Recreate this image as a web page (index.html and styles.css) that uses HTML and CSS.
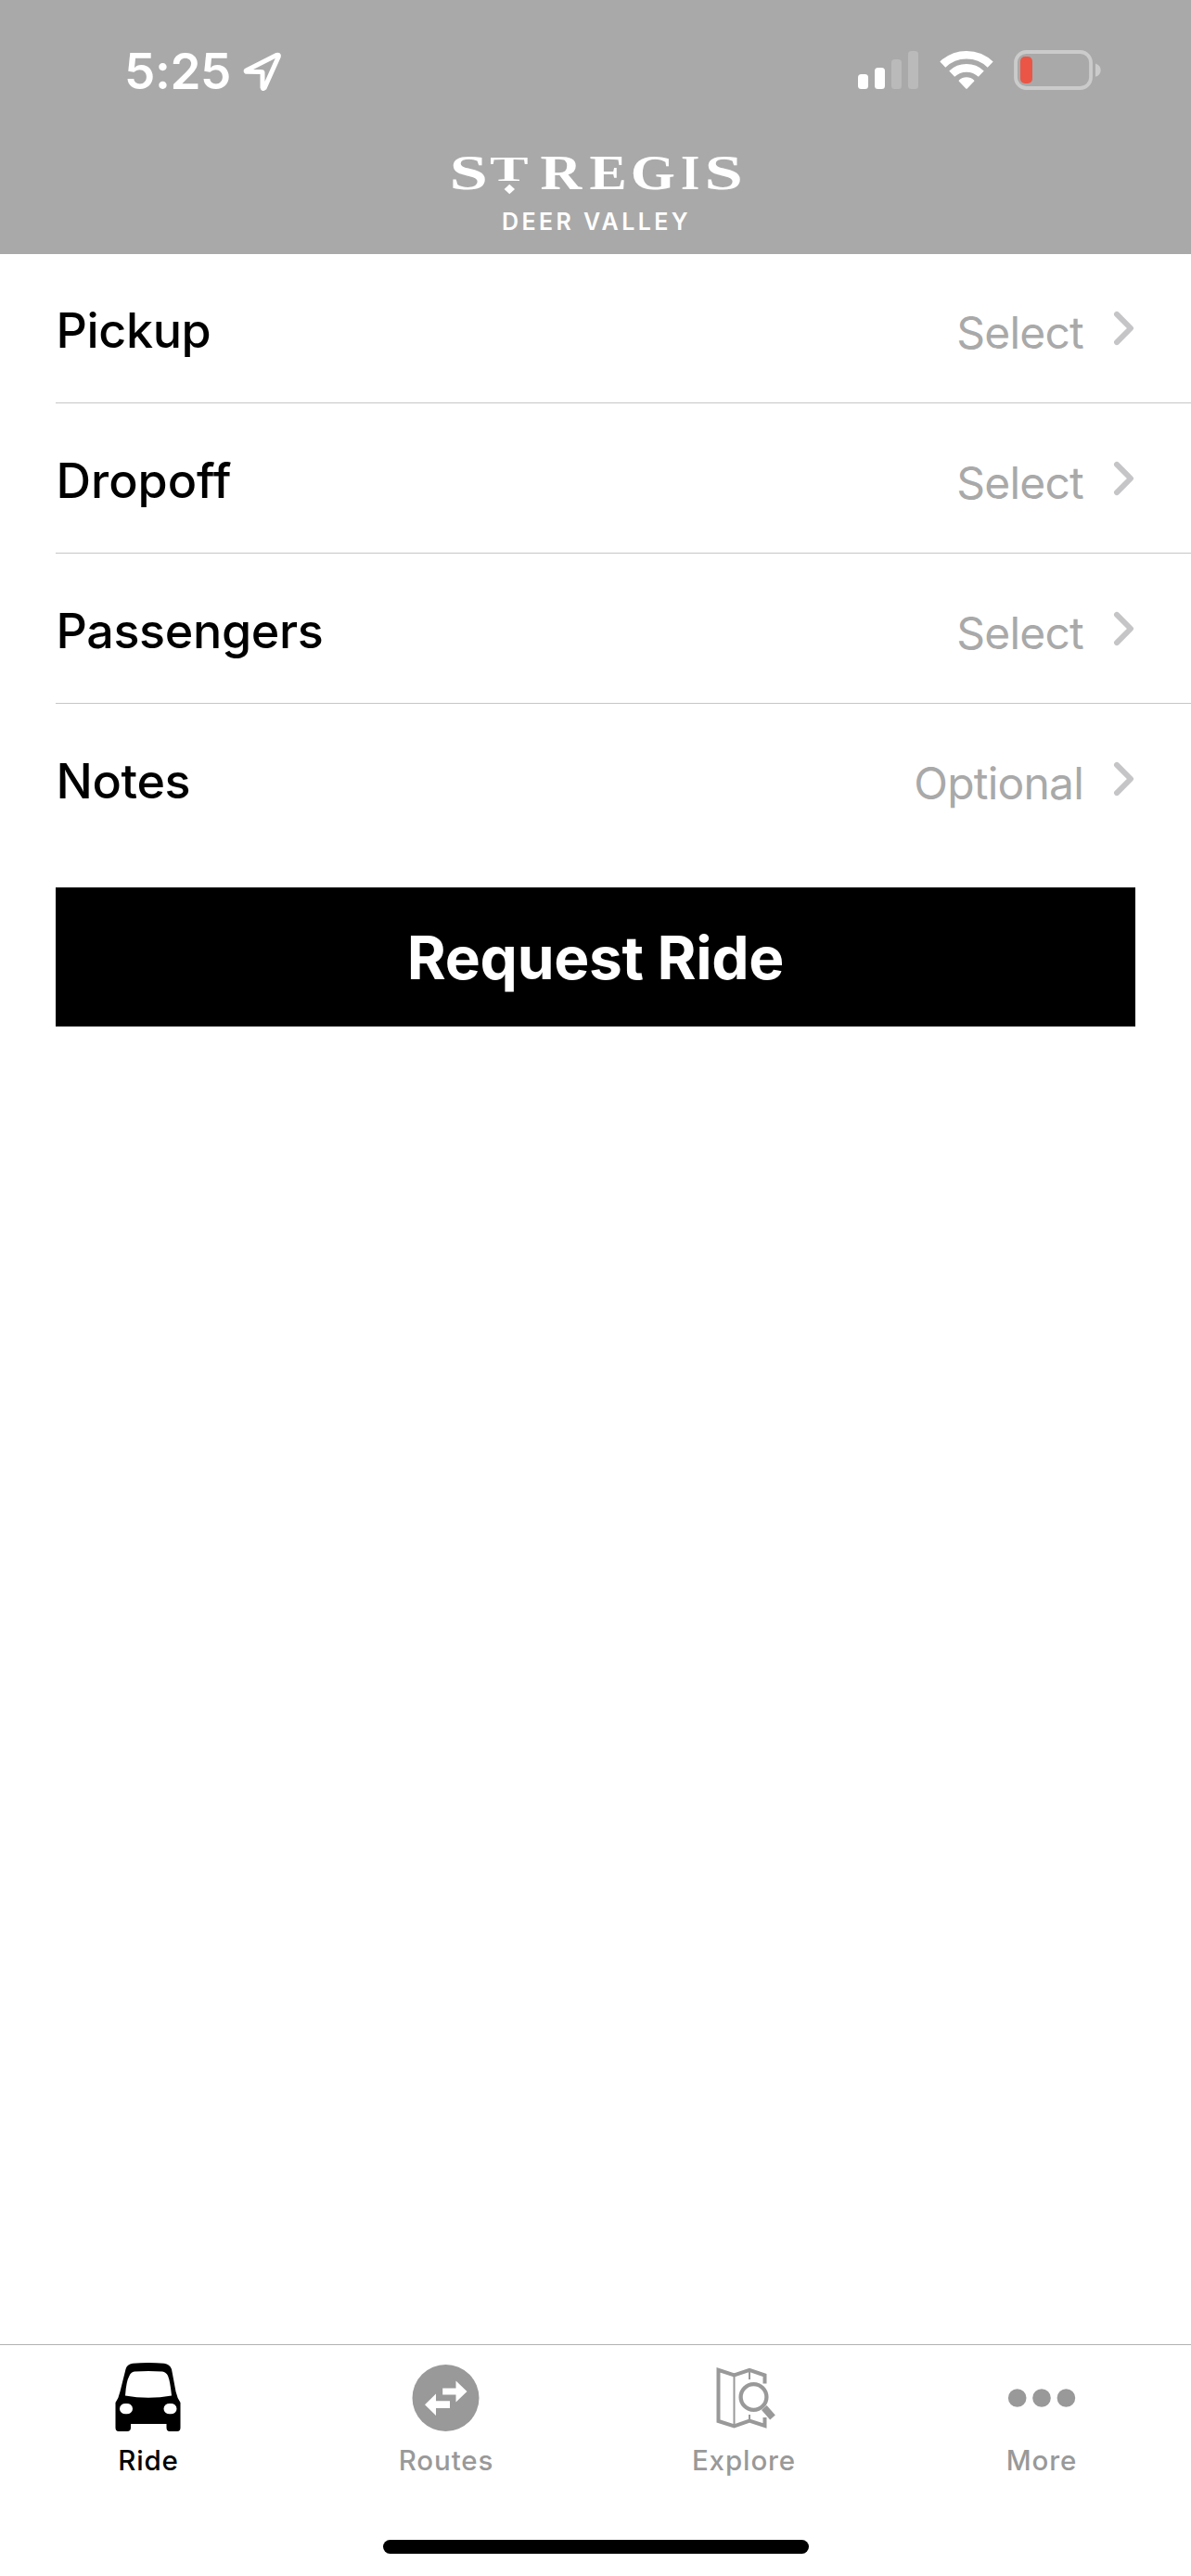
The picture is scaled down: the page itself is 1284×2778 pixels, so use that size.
FILE: index.html
```html
<!DOCTYPE html>
<html lang="en">
<head>
<meta charset="utf-8">
<title>St. Regis Deer Valley</title>
<link rel="stylesheet" href="styles.css">
</head>
<body>
<div class="app">
  <header class="header">
    <div class="status-bar">
      <div class="status-left">
        <span class="time">5:25</span>
        <svg class="icon-location" width="43" height="44" viewBox="0 0 43 44"><path d="M4.300 22.200Q3.600 21.400 5 20.700L37.500 4.300Q39.900 3.600 39.300 6L24.200 39.800Q22.400 41.500 22 39.200V23.600Q22 22.600 21 22.600Z" fill="none" stroke="#fff" stroke-width="5" stroke-linejoin="round"/></svg>
      </div>
      <div class="status-right">
        <svg class="icon-signal" width="65" height="41" viewBox="0 0 65 41"><g fill="#fff"><rect y="25" width="11" height="16" rx="3.5"/><rect x="18" y="18" width="11" height="23" rx="3.5"/></g><g fill="#bababa"><rect x="36" y="9" width="11" height="32" rx="3.5"/><rect x="54" width="11" height="41" rx="3.5"/></g></svg>
        <svg class="icon-wifi" width="58" height="43" viewBox="0 0 58 43"><g fill="none" stroke="#fff" stroke-width="8.6"><path d="M3.300 15.600A37 37 0 0 1 54.700 15.600"/><path d="M13.200 25.700A23 23 0 0 1 44.800 25.700"/></g><path d="M20.900 33.800a1 1 0 0 1 0-1.400A12 12 0 0 1 37.100 32.400a1 1 0 0 1 0 1.400L29.700 41.600a1 1 0 0 1-1.400 0Z" fill="#fff"/></svg>
        <svg class="icon-battery" width="95" height="43" viewBox="0 0 95 43"><rect x="2" y="2" width="81" height="39" rx="11.5" fill="none" stroke="#cbcbcb" stroke-width="3.8"/><rect x="7" y="7" width="13" height="29" rx="5" fill="#eb5545"/><path d="M88 14.500Q93.700 16.500 93.700 21.700T88 28.800Z" fill="#cbcbcb"/></svg>
      </div>
    </div>
    <div class="brand">
      <svg class="wordmark" width="312" height="42" viewBox="0 0 312 42" aria-label="St Regis">
        <text transform="translate(-1.500 37.800) scale(1.430 1)">S</text>
        <text class="wordmark-small" transform="translate(42.100 29) scale(1.620 1)">T</text>
        <text transform="translate(96.400 37.800) scale(1.190 1)">R</text>
        <text transform="translate(149.500 37.800) scale(1.160 1)">E</text>
        <text transform="translate(193.700 37.800) scale(1.190 1)">G</text>
        <text transform="translate(248 37.800) scale(1 1)">I</text>
        <text transform="translate(273.500 37.800) scale(1.430 1)">S</text>
        <path d="M63.300 32.800 69 38 63.300 43.200 57.600 38Z" fill="#fff"/>
      </svg>
      <div class="location-name">DEER VALLEY</div>
    </div>
  </header>
  <main class="content">
    <div class="row"><span class="label">Pickup</span><span class="value">Select</span><svg class="chevron" width="23" height="38" viewBox="0 0 23 38"><path d="M4 3.900 19 19 4 34.100"/></svg></div>
    <div class="row"><span class="label label-loose">Dropoff</span><span class="value">Select</span><svg class="chevron" width="23" height="38" viewBox="0 0 23 38"><path d="M4 3.900 19 19 4 34.100"/></svg></div>
    <div class="row"><span class="label">Passengers</span><span class="value">Select</span><svg class="chevron" width="23" height="38" viewBox="0 0 23 38"><path d="M4 3.900 19 19 4 34.100"/></svg></div>
    <div class="row"><span class="label">Notes</span><span class="value">Optional</span><svg class="chevron" width="23" height="38" viewBox="0 0 23 38"><path d="M4 3.900 19 19 4 34.100"/></svg></div>
    <button class="request">Request Ride</button>
  </main>
  <nav class="tabs">
    <a class="tab active"><svg width="76" height="80" viewBox="0 0 76 80"><path fill="currentColor" fill-rule="evenodd" d="M12.500 9Q14 3.500 20 2.700Q37 1.300 54 2.700Q60 3.500 62 9L66.500 33Q68 40 71.500 45V72Q71.500 76 68 76H60Q56.500 76 56.500 72V68H18V72Q18 76 14 76H5Q1.500 76 1.500 72V45Q5 40 6.500 33ZM12 37.500Q37 42 62 37.500Q60.500 22 58 16Q56 12 52 11.500Q37 10.500 22 11.500Q18 12 16.500 16Q13 22 12 37.500ZM13 46A6.200 5.700 0 1 0 13 57.300A6.200 5.700 0 1 0 13 46ZM60.500 46A6.200 5.700 0 1 0 60.500 57.300A6.200 5.700 0 1 0 60.500 46Z"/></svg><span>Ride</span></a>
    <a class="tab"><svg width="76" height="80" viewBox="0 0 76 80"><circle cx="36.500" cy="40" r="36" fill="currentColor"/><path fill="#fff" d="M33.200 29.500H47.500V21.500L59.500 33 47.500 44.500V36.500H33.200ZM41 43.300H26V35.500L14 47.300 26 59V51H41Z"/></svg><span>Routes</span></a>
    <a class="tab"><svg width="76" height="80" viewBox="0 0 76 80"><g fill="none" stroke="currentColor"><path stroke-width="4" d="M59.500 24.500V15.500L43 9.800 26.500 15.500 9.500 9.800V65L26.500 70.500 43 64.500 59.500 70V61"/><path stroke-width="2" d="M26.500 15V70M43 10V20M43 58V66"/><circle cx="47.500" cy="39" r="13.900" stroke-width="4.300"/><path stroke-width="7.500" d="M58.800 50.500 68 61"/></g></svg><span>Explore</span></a>
    <a class="tab"><svg width="76" height="80" viewBox="0 0 76 80"><g fill="currentColor"><circle cx="10.700" cy="40" r="9.800"/><circle cx="37" cy="40" r="9.800"/><circle cx="63.400" cy="40" r="9.800"/></g></svg><span>More</span></a>
  </nav>
  <div class="home-area"><div class="home-indicator"></div></div>
</div>
</body>
</html>
```
FILE: styles.css
```css
* { box-sizing: border-box; }

body {
  margin: 0;
  background: #fff;
  color: #000;
  font-family: Inter, "Liberation Sans", sans-serif;
}

svg { display: block; flex: none; }

.app {
  display: flex;
  flex-direction: column;
  width: 1284px;
  height: 2778px;
}

.header {
  height: 274px;
  flex: none;
  background: #a9a9a9;
  color: #fff;
}

.status-bar {
  display: flex;
  justify-content: space-between;
  height: 166px;
  padding: 0 96px 0 134px;
}

.status-left,
.status-right { display: flex; }

.time {
  margin-top: 45px;
  font-size: 53px;
  font-weight: 600;
  letter-spacing: -0.4px;
  line-height: 64px;
}

.icon-location { margin: 55px 0 0 12px; }
.icon-signal { margin-top: 55px; }
.icon-wifi { margin: 54px 0 0 23px; }
.icon-battery { margin: 54px 0 0 22px; }

.brand {
  display: flex;
  flex-direction: column;
  align-items: center;
}

.wordmark {
  overflow: visible;
  fill: #fff;
  font-family: "Liberation Serif", serif;
  font-size: 52px;
  font-weight: 700;
}

.wordmark-small { font-size: 38.5px; }

.location-name {
  margin-top: 16px;
  padding-left: 2px;
  font-size: 25px;
  font-weight: 600;
  letter-spacing: 3.4px;
  line-height: 30px;
}

.content { flex: 1; min-height: 0; }

.row {
  display: flex;
  align-items: baseline;
  height: 162px;
  margin-left: 60px;
  padding: 52px 60px 0 0;
  border-bottom: 1px solid #c6c6c8;
}

.row:first-child { height: 161px; padding-top: 51px; }
.row:nth-child(4) { border-bottom-color: transparent; }

.label {
  flex: 1;
  padding-left: 0.5px;
  font-size: 52px;
  font-weight: 500;
  font-variant-ligatures: none;
  letter-spacing: -0.35px;
  line-height: 64px;
}

.label-loose { letter-spacing: 0; }

.value {
  position: relative;
  top: 1px;
  color: #a9a9a9;
  font-size: 48px;
  letter-spacing: -0.8px;
  line-height: 60px;
}

.chevron {
  align-self: flex-start;
  margin: 10px 1px 0 32px;
  fill: none;
  stroke: #c5c5c7;
  stroke-width: 6;
  stroke-linecap: round;
  stroke-linejoin: round;
}

.request {
  display: block;
  width: 1164px;
  height: 150px;
  margin: 36px 60px 0;
  padding: 1px 0 0;
  border: 0;
  background: #000;
  color: #fff;
  font: 700 64px/149px Inter, "Liberation Sans", sans-serif;
  letter-spacing: -0.3px;
}

.tabs {
  display: flex;
  height: 170px;
  border-top: 1px solid #b2b2b2;
}

.tab {
  display: flex;
  flex: 1;
  flex-direction: column;
  align-items: center;
  padding-top: 17px;
  color: #999;
  font-size: 29.5px;
  font-weight: 500;
  letter-spacing: 0.9px;
  line-height: 36px;
}

.tab span { margin: 9px 1px 0 0; }
.tab.active { color: #000; }

.home-area {
  display: flex;
  justify-content: center;
  height: 80px;
  padding-top: 41px;
}

.home-indicator {
  width: 459px;
  height: 15px;
  border-radius: 8px;
  background: #000;
}
```
